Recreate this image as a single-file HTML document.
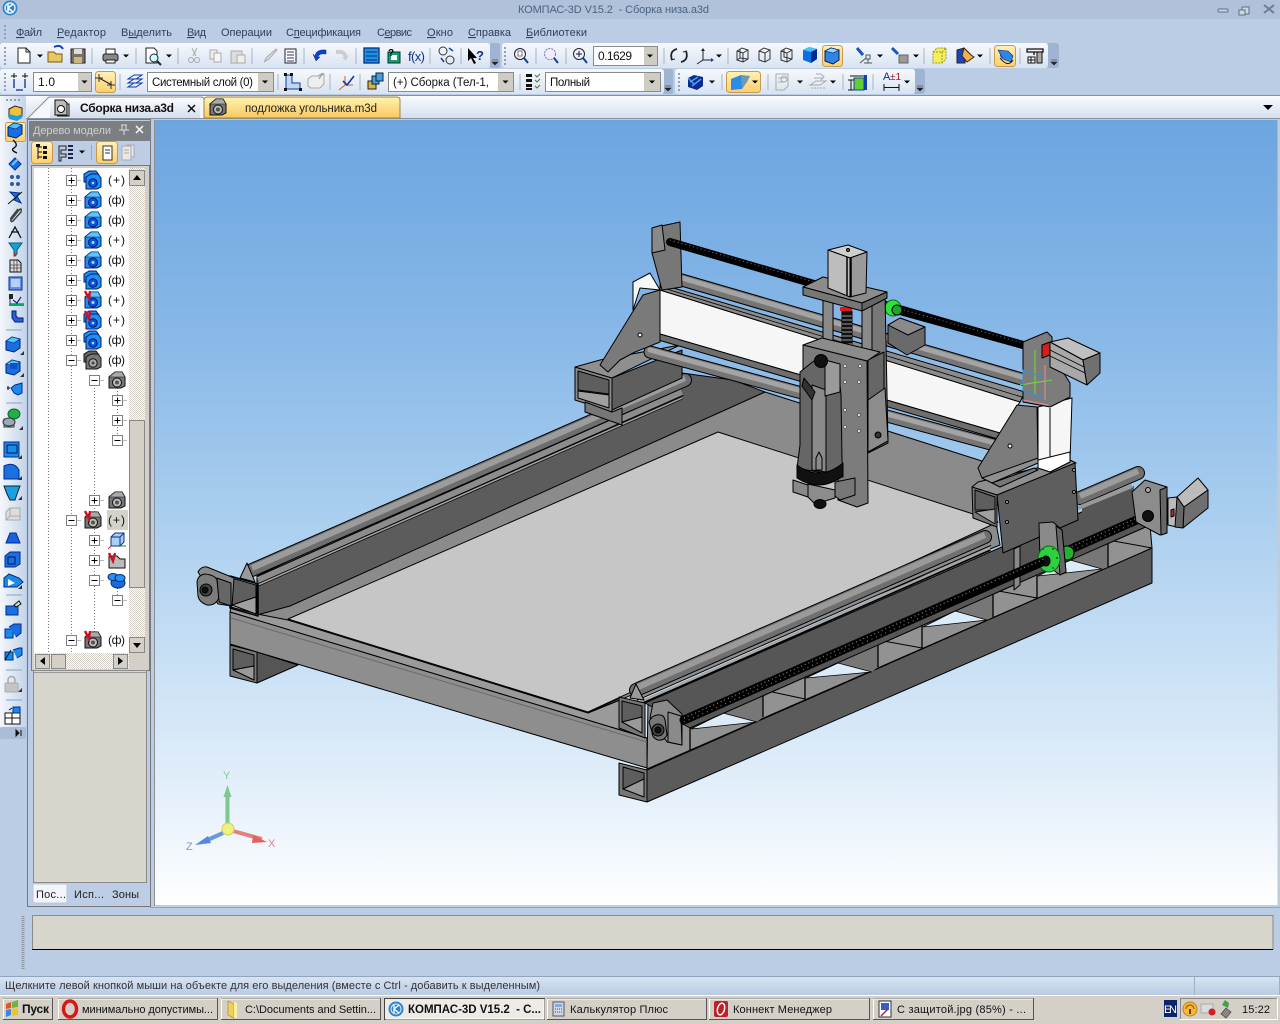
<!DOCTYPE html>
<html lang="ru"><head><meta charset="utf-8"><title>КОМПАС-3D V15.2 - Сборка низа.a3d</title>
<style>
html,body{margin:0;padding:0;background:#bacde5;width:1280px;height:1024px;overflow:hidden}
svg{display:block;position:absolute;left:0;top:0}
text{font-family:"Liberation Sans","Noto Sans CJK SC",sans-serif;font-size:11px;white-space:pre}
.m{fill:#2f4060;font-size:11px}
.t{fill:#111;font-size:12px}
.b{fill:#111;font-size:11px}
</style></head><body>
<svg width="1280" height="1024" viewBox="0 0 1280 1024" xmlns="http://www.w3.org/2000/svg">
<defs>
<linearGradient id="vp" x1="0" y1="0" x2="0" y2="1"><stop offset="0" stop-color="#6ca5e0"/><stop offset=".25" stop-color="#85b6e7"/><stop offset=".48" stop-color="#a6ccee"/><stop offset=".87" stop-color="#e6f1fb"/><stop offset="1" stop-color="#fff"/></linearGradient>
<linearGradient id="tb" x1="0" y1="0" x2="0" y2="1"><stop offset="0" stop-color="#f6f9fd"/><stop offset="1" stop-color="#d8e3f1"/></linearGradient>
<linearGradient id="tabs" x1="0" y1="0" x2="0" y2="1"><stop offset="0" stop-color="#fbfcfe"/><stop offset="1" stop-color="#d3dfee"/></linearGradient>
<linearGradient id="lt" x1="0" y1="0" x2="1" y2="0"><stop offset="0" stop-color="#f4f7fc"/><stop offset="1" stop-color="#c4d4e9"/></linearGradient>
<linearGradient id="sel" x1="0" y1="0" x2="0" y2="1"><stop offset="0" stop-color="#fff1b8"/><stop offset="1" stop-color="#fdcf6c"/></linearGradient>
<linearGradient id="ytab" x1="0" y1="0" x2="0" y2="1"><stop offset="0" stop-color="#fff3b0"/><stop offset="1" stop-color="#f9c860"/></linearGradient>
<linearGradient id="st" x1="0" y1="0" x2="0" y2="1"><stop offset="0" stop-color="#d9e5f4"/><stop offset="1" stop-color="#b9cbe3"/></linearGradient>
<pattern id="hatch" width="2" height="2" patternUnits="userSpaceOnUse"><rect width="2" height="2" fill="#fff"/><rect width="1" height="1" fill="#d4d0c8"/><rect x="1" y="1" width="1" height="1" fill="#d4d0c8"/></pattern>
<symbol id="bi" overflow="visible"><path d="M-8,-3 L-2,-8 L5,-8 L8,-3 L8,6 L4,8 L-8,8Z" fill="#1d90f4" stroke="#001a70"/><path d="M-8,-3 L-2,-8 L5,-8 L8,-3 L3,-3Z" fill="#55c8ff" stroke="#001a70" stroke-width=".6"/><circle cx="0" cy="2.500" r="4.500" fill="#0d52d8" stroke="#001a70"/><circle cx="0" cy="2.500" r="1.500" fill="#9fe0ff"/></symbol>
<symbol id="bm" overflow="visible"><path d="M-9,-6 L-4,-9 L3,-9 L6,-5 L6,2 L-9,2Z" fill="#1d90f4" stroke="#001a70"/><path d="M-7,-3 L-2,-6 L5,-6 L8,-2 L8,7 L4,9 L-7,9Z" fill="#1d90f4" stroke="#001a70"/><circle cx="0" cy="3" r="4.200" fill="#0d52d8" stroke="#001a70"/><circle cx="0" cy="3" r="1.300" fill="#9fe0ff"/></symbol>
<symbol id="gi" overflow="visible"><path d="M-8,-3 L-2,-8 L5,-8 L8,-3 L8,6 L4,8 L-8,8Z" fill="#777" stroke="#111"/><path d="M-8,-3 L-2,-8 L5,-8 L8,-3 L3,-3Z" fill="#aaa" stroke="#111" stroke-width=".6"/><circle cx="0" cy="2.500" r="4.500" fill="#bbb" stroke="#111"/><circle cx="0" cy="2.500" r="2" fill="#555"/></symbol>
<symbol id="gm" overflow="visible"><path d="M-9,-6 L-4,-9 L3,-9 L6,-5 L6,2 L-9,2Z" fill="#666" stroke="#111"/><path d="M-7,-3 L-2,-6 L5,-6 L8,-2 L8,7 L4,9 L-7,9Z" fill="#777" stroke="#111"/><circle cx="0" cy="3" r="4.200" fill="#aaa" stroke="#111"/><circle cx="0" cy="3" r="1.500" fill="#444"/></symbol>
<symbol id="rc" overflow="visible"><path d="M-8,-9 L-4,-1 L-3,-9" fill="none" stroke="#d01020" stroke-width="2.400"/></symbol>
<symbol id="pl" overflow="visible"><rect x="-5" y="-5" width="10" height="10" fill="#fff" stroke="#808080"/><path d="M-3,0H3M0,-3V3" stroke="#000" fill="none"/><path d="M6,0H10" stroke="#777" stroke-dasharray="1 1"/></symbol>
<symbol id="mi" overflow="visible"><rect x="-5" y="-5" width="10" height="10" fill="#fff" stroke="#808080"/><path d="M-3,0H3" stroke="#000" fill="none"/><path d="M6,0H10" stroke="#777" stroke-dasharray="1 1"/></symbol>
<symbol id="ar" overflow="visible"><path d="M-3,-1.500 H3 L0,1.500Z" fill="#000"/></symbol>
<symbol id="sq" overflow="visible"><path d="M-7,-3 L-1,-7 L7,-5 L7,4 L1,8 L-7,6Z" fill="#1a6fe0" stroke="#002080"/><path d="M-7,-3 L-1,-7 L7,-5 L1,-1Z" fill="#4ec2ff" stroke="#002080" stroke-width=".6"/></symbol>
<symbol id="cor" overflow="visible"><path d="M0,0H-4L0,-4Z" fill="#333"/></symbol>
</defs>

<!-- window chrome -->
<rect width="1280" height="19" fill="#b0c1d9"/>
<rect y="19" width="1280" height="957" fill="#bacde5"/>
<text x="518" y="13" fill="#4a6484" textLength="191">КОМПАС-3D V15.2  - Сборка низа.a3d</text>
<circle cx="10" cy="8" r="7.500" fill="#2f83cf"/><circle cx="10" cy="8" r="5" fill="none" stroke="#d8eefc" stroke-width="1.500"/><path d="M8,4V12M8,8L13,4M8,8L13,12" stroke="#fff" stroke-width="1.500" fill="none"/>
<g stroke="#5e7088" fill="none"><rect x="1218" y="9" width="10" height="3" rx="1" fill="#cdd6e2"/><rect x="1242" y="7" width="7" height="7" fill="#cdd6e2"/><rect x="1239" y="10" width="6" height="5" fill="#cdd6e2"/><path d="M1264,5 L1274,13M1274,5 L1264,13" stroke-width="2" stroke="#6e7e94"/></g>
<!-- menu -->
<path d="M5,25V40" stroke="#8ea1bb" stroke-dasharray="2 2" stroke-width="2"/>
<text class="m" x="16" y="36" textLength="26"><tspan text-decoration="underline">Ф</tspan>айл</text>
<text class="m" x="57" y="36" textLength="49"><tspan text-decoration="underline">Р</tspan>едактор</text>
<text class="m" x="121" y="36" textLength="51">В<tspan text-decoration="underline">ы</tspan>делить</text>
<text class="m" x="187" y="36" textLength="19"><tspan text-decoration="underline">В</tspan>ид</text>
<text class="m" x="221" y="36" textLength="51">Операции</text>
<text class="m" x="286" y="36" textLength="75">С<tspan text-decoration="underline">п</tspan>ецификация</text>
<text class="m" x="377" y="36" textLength="35">С<tspan text-decoration="underline">е</tspan>рвис</text>
<text class="m" x="427" y="36" textLength="26"><tspan text-decoration="underline">О</tspan>кно</text>
<text class="m" x="468" y="36" textLength="43"><tspan text-decoration="underline">С</tspan>правка</text>
<text class="m" x="526" y="36" textLength="61"><tspan text-decoration="underline">Б</tspan>иблиотеки</text>

<!-- toolbars -->
<rect x="490" y="43" width="10" height="25" rx="2" fill="#9fb4d2"/><path d="M492,60h6M492,62h6l-3,3z" stroke="#222" fill="#222" stroke-width=".6"/>
<rect x="0" y="43" width="490" height="25" rx="3" fill="url(#tb)"/>
<rect x="1046" y="43" width="13" height="25" rx="3" fill="#9fb4d2"/><path d="M1051,60h6M1051,62h6l-3,3z" stroke="#222" fill="#222" stroke-width=".6"/>
<rect x="502" y="43" width="546" height="25" rx="3" fill="url(#tb)"/>
<rect x="662" y="69" width="11" height="25" rx="2" fill="#9fb4d2"/><path d="M665,86h6M665,88h6l-3,3z" stroke="#222" fill="#222" stroke-width=".6"/>
<rect x="0" y="69" width="664" height="25" rx="3" fill="url(#tb)"/>
<rect x="913" y="69" width="12" height="25" rx="3" fill="#9fb4d2"/><path d="M917,86h6M917,88h6l-3,3z" stroke="#222" fill="#222" stroke-width=".6"/>
<rect x="675" y="69" width="240" height="25" rx="3" fill="url(#tb)"/>
<g stroke="#8ea1bb" stroke-width="2" stroke-dasharray="2 2" fill="none"><path d="M5,47V65M5,73V91M505,47V65M679,73V91"/></g>
<g stroke="#a9b4c4" fill="none"><path d="M92,48V64M136,48V64M178,48V64M252,48V64M304,48V64M356,48V64M430,48V64M461,48V64M536,48V64M566,48V64M664,48V64M728,48V64M924,48V64M990,48V64M1020,48V64M120,74V90M278,74V90M330,74V90M360,74V90M520,74V90M722,74V90M768,74V90M843,74V90M873,74V90"/></g>

<!-- TB1 icons -->
<path d="M18,48h8l4,4v11h-12z" fill="#fff" stroke="#222"/><path d="M26,48v4h4" fill="none" stroke="#222"/>
<use href="#ar" x="40" y="56"/>
<path d="M48,52h6l2,2h6v8h-14z" fill="#e8c860" stroke="#7a5a10"/><path d="M54,47 Q60,44 63,49" fill="none" stroke="#1040c0" stroke-width="2"/>
<rect x="71" y="49" width="14" height="14" fill="#7a7068" stroke="#222"/><rect x="74" y="49" width="8" height="5" fill="#ddd"/><rect x="74" y="57" width="8" height="6" fill="#c8b880"/>
<rect x="103" y="54" width="15" height="7" rx="2" fill="#888" stroke="#222"/><rect x="106" y="49" width="9" height="5" fill="#fff" stroke="#222"/><rect x="106" y="60" width="9" height="3" fill="#fff" stroke="#222"/>
<use href="#ar" x="126" y="56"/>
<path d="M146,48h8l3,3v12h-11z" fill="#fff" stroke="#222"/><circle cx="154" cy="58" r="4" fill="#cfe" stroke="#225"/><path d="M157,61l4,4" stroke="#224" stroke-width="2"/>
<use href="#ar" x="169" y="56"/>
<g stroke="#aaa" fill="none"><path d="M192,48l4,8M197,48l-4,8"/><circle cx="191" cy="60" r="2.500"/><circle cx="197" cy="60" r="2.500"/><rect x="210" y="50" width="7" height="9" fill="#eee"/><rect x="214" y="53" width="7" height="9" fill="#f6f6f6"/><rect x="231" y="51" width="11" height="12" fill="#ddd"/><rect x="237" y="55" width="8" height="8" fill="#eee"/><path d="M264,62l3,-5 9,-8 1,1 -8,9z" fill="#ddd"/></g>
<rect x="285" y="49" width="11" height="14" fill="#fff" stroke="#223"/><path d="M287,52h7M287,55h7M287,58h7M287,61h7" stroke="#335" />
<path d="M326,50 Q316,49 315,56l-2,-2 3,7 4,-4 -2,0 Q319,53 326,54z" fill="#1040d0" stroke="#0a2a90" stroke-width=".5"/>
<path d="M336,50 Q346,49 347,56l2,-2 -3,7 -4,-4 2,0 Q343,53 336,54z" fill="#ccc"/>
<rect x="364" y="48" width="15" height="15" fill="#2090e0" stroke="#003080" stroke-width="1.300"/><path d="M366,52h11M366,56h11M366,60h11" stroke="#003080"/>
<rect x="388" y="52" width="12" height="11" fill="#1c9a70" stroke="#033"/><rect x="391" y="55" width="6" height="5" fill="#fff"/><text x="388" y="56" fill="#000" style="font-weight:bold;font-size:10px">?</text>
<text x="408" y="61" fill="#123088" style="font-size:13px" textLength="17">f(x)</text>
<circle cx="443" cy="51" r="4" fill="none" stroke="#333"/><circle cx="450" cy="60" r="4" fill="none" stroke="#333"/><path d="M449,48l4,3M441,58l3,4" stroke="#1040c0" stroke-width="1.500"/>
<path d="M468,48v13l3,-3 3,6 2,-1 -3,-5h4z" fill="#000"/><text x="476" y="60" fill="#123088" style="font-size:13px;font-weight:bold">?</text>
<circle cx="520" cy="54" r="5.500" fill="#eef" stroke="#223"/><path d="M524,58l4,5" stroke="#1040a0" stroke-width="2"/><rect x="518" y="51" width="4" height="5" fill="#fff" stroke="#333" stroke-width=".6"/>
<circle cx="550" cy="54" r="5.500" fill="#eef" stroke="#77a" stroke-dasharray="2 1"/><path d="M554,58l4,5" stroke="#1040a0" stroke-width="2"/>
<circle cx="579" cy="54" r="5.500" fill="#eef" stroke="#223"/><path d="M576,54h6M579,51v6" stroke="#123"/><path d="M583,58l4,5" stroke="#1040a0" stroke-width="2"/>
<rect x="593.500" y="46.500" width="64" height="19" fill="#fff" stroke="#8a8a8a"/><rect x="644" y="47" width="13" height="18" fill="#cfccc4"/><use href="#ar" x="650" y="56"/>
<text x="598" y="60" fill="#111" textLength="34" style="font-size:12px">0.1629</text>
<path d="M677,49 Q669,51 672,60M681,62 Q689,60 686,51" fill="none" stroke="#222" stroke-width="1.800"/><path d="M671,60l4,-1M687,51l-4,1" stroke="#222"/>
<path d="M703,49V60L697,64M703,60H711" fill="none" stroke="#222"/><path d="M711,58l3,2 -3,2z" fill="#1040c0"/><path d="M701,51l2,-3 2,3z" fill="#222"/><use href="#ar" x="719" y="56"/>
<g fill="none" stroke="#333"><path d="M737,51l5,-3 6,2v9l-5,3 -6,-2zM737,51l6,2v9M743,53l5,-3M740,49v9l-3,2M740,58l8,1"/><path d="M759,51l5,-3 6,2v9l-5,3 -6,-2zM759,51l6,2v9M765,53l5,-3"/><path d="M781,51l5,-3 6,2v9l-5,3 -6,-2zM781,51l6,2v9M787,53l5,-3M784,49v8l8,2"/></g>
<path d="M803,50l6,-3 8,2 v10l-6,4 -8,-3z" fill="#0a6fe0"/><path d="M803,50l6,-3 8,2 -6,3z" fill="#48c0ff"/><path d="M811,52v11l6,-4V49z" fill="#002a90"/>
<rect x="822.500" y="45.500" width="20" height="21" rx="3" fill="url(#sel)" stroke="#c99a4e"/><path d="M825,51l6,-3 8,2 v10l-6,4 -8,-3z" fill="#2e86e0" stroke="#001a60"/><path d="M825,51l6,-3 8,2 -6,3z" fill="#8dd8ff" stroke="#001a60" stroke-width=".6"/>
<path d="M857,48l6,7" stroke="#1458c0" stroke-width="3"/><path d="M866,55h4v4h-4zM868,59v4M864,63h8M866,58l-6,5" fill="none" stroke="#555"/><use href="#ar" x="880" y="56"/>
<path d="M892,48l6,6" stroke="#1458c0" stroke-width="3"/><rect x="899" y="55" width="9" height="8" fill="#999" stroke="#666"/><use href="#ar" x="916" y="56"/>
<path d="M933,52l4,-4h9v11l-4,4h-9z" fill="#f5ef60" stroke="#9a9a20" stroke-dasharray="2 1"/><path d="M933,52h9v11M942,52l4,-4" fill="none" stroke="#9a9a20" stroke-dasharray="2 1"/>
<path d="M957,50l7,-2 7,7 -6,3v5h-8z" fill="#1448c0" stroke="#321"/><path d="M964,48l7,7 3,2 -7,5 -5,-6z" fill="#f2b050" stroke="#421"/><use href="#ar" x="980" y="56"/>
<rect x="994.500" y="45.500" width="21" height="21" rx="3" fill="url(#sel)" stroke="#c99a4e"/><circle cx="1004" cy="55" r="4" fill="#1c6ad8"/><path d="M998,50l10,1 5,5-2,6-8,-3z" fill="#2f86e4" stroke="#012a70" stroke-width=".6"/><path d="M1000,58 Q1008,68 1013,60" fill="none" stroke="#111"/>
<path d="M1027,49h16v3h-16zM1040,52v11M1034,52v3" stroke="#111" fill="none" stroke-width="1.300"/><rect x="1037" y="52" width="5" height="11" fill="#aaa" stroke="#111"/><rect x="1028" y="57" width="7" height="6" fill="#fff" stroke="#111"/><path d="M1028,60h7M1031,57v6" stroke="#111"/>

<!-- TB2 icons -->
<g stroke="#134" fill="none"><path d="M14,79V88M25,79V88M16,90h7" stroke="#0a2a90" stroke-width="1.300"/><path d="M14,73v5M11,76h6M25,73v5M22,76h6" stroke="#111"/></g>
<rect x="33.500" y="72.500" width="58" height="19" fill="#fff" stroke="#8a8a8a"/><rect x="78" y="73" width="13" height="18" fill="#cfccc4"/><use href="#ar" x="84.500" y="82"/>
<text x="38" y="86" fill="#111" textLength="17" style="font-size:12px">1.0</text>
<rect x="95.500" y="71.500" width="20" height="21" rx="3" fill="url(#sel)" stroke="#c99a4e"/><path d="M99,78L112,85" stroke="#222"/><g fill="#222"><path d="M99,74v8M95,78h8" stroke="#333"/><path d="M111,81v8M107,85h8" stroke="#333"/></g>
<g fill="none" stroke="#1038a8"><path d="M128,79l6,-4h8l-6,4zM128,83l6,-4h8l-6,4zM128,87l6,-4h8l-6,4z"/></g>
<rect x="147.500" y="72.500" width="126" height="19" fill="#fff" stroke="#8a8a8a"/><rect x="258" y="73" width="15" height="18" fill="#cfccc4"/><use href="#ar" x="265" y="82"/>
<text x="152" y="86" fill="#111" textLength="101" style="font-size:11.500px">Системный слой (0)</text>
<path d="M286,75v14h14v-6h-8v-8z" fill="#c0d8f0" stroke="#1038a8"/><g fill="#111"><rect x="284" y="73" width="3" height="3"/><rect x="290" y="73" width="3" height="3"/><rect x="284" y="88" width="3" height="3"/><rect x="299" y="88" width="3" height="3"/></g>
<path d="M308,79l4,-3h8l4,-2v10l-4,4h-9l-3,-2z" fill="#eee" stroke="#aaa"/><path d="M318,76l5,-3-4,6" stroke="#999" fill="#ccc"/>
<path d="M345,76v9l-6,5M345,85h8" stroke="#d06030" fill="none"/><path d="M343,81l4,4 7,-9" stroke="#1038a8" stroke-width="1.600" fill="none"/>
<rect x="368" y="81" width="8" height="8" fill="#e0b040" stroke="#222"/><rect x="372" y="76" width="7" height="8" fill="#40a0e0" stroke="#123"/><rect x="376" y="73" width="7" height="8" fill="#40a0e0" stroke="#123"/>
<rect x="388.500" y="72.500" width="125" height="19" fill="#fff" stroke="#8a8a8a"/><rect x="498" y="73" width="15" height="18" fill="#cfccc4"/><use href="#ar" x="505.500" y="82"/>
<text x="393" y="86" fill="#111" textLength="96" style="font-size:11.500px">(+) Сборка (Тел-1,</text>
<g fill="#111"><rect x="526" y="74" width="6" height="3"/><rect x="526" y="79" width="6" height="3"/><rect x="526" y="84" width="6" height="3"/><rect x="526" y="88" width="6" height="2"/></g><path d="M535,75l2,2 3,-3M535,80l2,2 3,-3M535,86l2,2 3,-3" stroke="#4a7a3a" fill="none"/>
<rect x="545.500" y="72.500" width="115" height="19" fill="#fff" stroke="#8a8a8a"/><rect x="644" y="73" width="16" height="18" fill="#cfccc4"/><use href="#ar" x="652" y="82"/>
<text x="550" y="86" fill="#111" textLength="40" style="font-size:11.500px">Полный</text>
<path d="M688,78l6,-3 9,2v9l-6,4 -9,-3z" fill="#0c2a90"/><path d="M690,82l8,-5M692,86l9,-7M688,78l6,6" stroke="#4ea0f0" stroke-width="1.500"/><use href="#ar" x="712" y="82"/>
<rect x="726.500" y="71.500" width="34" height="21" rx="3" fill="url(#sel)" stroke="#c99a4e"/><path d="M731,79l10,-4 9,1 -3,6 -5,7 -11,1z" fill="#2b8ce8"/><path d="M741,75l9,1-3,6-5,7z" fill="#ffc14d" opacity=".3"/><use href="#ar" x="755" y="82"/>
<g fill="none" stroke="#aaa"><path d="M776,74h12v12l-4,4h-8zM778,78h8M778,82h6"/><circle cx="784" cy="79" r="3"/></g><use href="#ar" x="800" y="82"/>
<g fill="none" stroke="#aaa"><path d="M810,85l6,-4h10l-6,4zM816,74h5l3,3 -3,3M814,78h8"/><path d="M811,88h14" stroke-dasharray="2 1"/></g><use href="#ar" x="833" y="82"/>
<path d="M850,76h14M851,80v10M848,80h6M848,90h6" stroke="#111" fill="none"/><rect x="854" y="78" width="10" height="12" fill="#60d030" stroke="#1040b0"/><rect x="864" y="75" width="3" height="15" fill="#1040b0"/>
<text x="883" y="80" fill="#123088" style="font-size:11px">A</text><text x="890" y="80" fill="#b01020" style="font-size:10px">±1</text><path d="M884,84v7M899,84v7M884,87.500h15" stroke="#111" fill="none"/><use href="#ar" x="907" y="82"/>

<!-- tabs -->
<rect y="95" width="1280" height="24" fill="url(#tabs)"/>
<path d="M0,95.500H1280M0,118.500H1280" stroke="#8c8f94" fill="none"/>
<path d="M28,118 L49,97 H202 L206,100 V118" fill="#f4f7fc" stroke="#8a8d94"/><rect x="50" y="98" width="150" height="20" fill="url(#tabs)"/>
<path d="M55,100h9l3,3v12h-12z" fill="#bbb" stroke="#111"/><circle cx="61" cy="109" r="3.500" fill="#fff" stroke="#111"/><path d="M67,104h2v12h-12" fill="none" stroke="#111"/>
<text x="80" y="112" fill="#111" style="font-weight:bold;font-size:12px" textLength="94">Сборка низа.a3d</text>
<path d="M188,105l7,7M195,105l-7,7" stroke="#111" stroke-width="1.500"/>
<path d="M204,118 V100 Q204,97 208,97 H396 Q400,97 400,100 V118Z" fill="url(#ytab)" stroke="#9a8444"/>
<use href="#gi" x="218" y="107"/>
<text x="245" y="112" fill="#222" textLength="132" style="font-size:11.500px">подложка угольника.m3d</text>
<path d="M1263,105h10l-5,5z" fill="#000"/>

<!-- left vertical toolbar -->
<rect x="0" y="96" width="26" height="632" rx="2" fill="url(#lt)"/>
<rect x="0" y="727" width="26" height="12" fill="#a9bcd8" rx="2"/><path d="M16,730l3,3 -3,3zM21,730v6" stroke="#111" fill="#111"/>
<path d="M6,100h14" stroke="#8ea1bb" stroke-dasharray="2 2" stroke-width="2"/>
<path d="M9,109l6,-3 7,2v8l-5,3 -8,-2z" fill="#f0c040" stroke="#321"/><path d="M9,114l8,2 5,-2v4l-5,3 -8,-2z" fill="#18a0e0"/>
<rect x="5.500" y="122.500" width="20" height="19" rx="2" fill="url(#sel)" stroke="#c99a4e"/><use href="#sq" x="15" y="130" />
<path d="M13,140 Q19,145 14,148 Q10,150 17,153" fill="none" stroke="#111" stroke-width="1.400"/>
<path d="M9,164l6,-6 6,6-6,6z" fill="#1a6fe0" stroke="#003090"/><path d="M12,165l6,-6" stroke="#6cc8ff" stroke-width="2"/>
<g fill="#2a5aa0"><circle cx="12" cy="177" r="2"/><circle cx="18" cy="177" r="2"/><circle cx="12" cy="184" r="2"/><circle cx="18" cy="184" r="2"/></g>
<path d="M10,192l6,6 -2,2 7,3 -4,-7 3,-3z" fill="#1a6fe0" stroke="#003090"/><path d="M8,204 L22,192" stroke="#111"/>
<path d="M11,220 L19,210 Q22,207 21,212 L13,221 Q10,223 11,218 L18,209" fill="none" stroke="#444" stroke-width="1.500"/>
<path d="M9,238 L15,227 L21,238M11,232h8" fill="none" stroke="#111" stroke-width="1.300"/>
<path d="M9,243h13l-5,7v4l-3,2v-6z" fill="#18a0d0" stroke="#0a5a80"/><circle cx="15" cy="255" r="1.500" fill="#d02020"/>
<path d="M10,260h8l3,3v9h-11z" fill="#ddd" stroke="#111"/><path d="M10,265h11M10,268h11M14,260v12M17,260v12" stroke="#111" stroke-width=".6"/>
<rect x="9" y="277" width="13" height="13" fill="#6090e8" stroke="#123080"/><rect x="11" y="279" width="9" height="8" fill="#b8d0f4"/>
<path d="M10,294v10h14" stroke="#123080" fill="none"/><rect x="9" y="294" width="4" height="5" fill="#222"/><path d="M13,300l4,3 4,-6" fill="none" stroke="#228" stroke-width="1.200"/><path d="M9,305h15" stroke="#0a6" stroke-width="2"/>
<path d="M12,311v7l3,4h8v-4h-5l-2,-2v-5z" fill="#2a60d0" stroke="#002080"/>
<path d="M6,330h16M6,403h16M6,595h16M6,670h16M6,700h16" stroke="#8ea1bb"/>
<use href="#sq" x="13" y="344"/><use href="#cor" x="24" y="355"/>
<use href="#sq" x="13" y="367"/><rect x="10" y="363" width="7" height="6" fill="#1050c0"/><use href="#cor" x="24" y="377"/>
<path d="M7,388h3M8,386v4" stroke="#111"/><path d="M11,388l4,-3 7,-2v10l-4,2 -4,-2z" fill="#1c8ae8" stroke="#002a90"/>
<rect x="4" y="419" width="10" height="8" fill="#ccc" stroke="#333"/><ellipse cx="14" cy="414" rx="6" ry="5" fill="#22b040" stroke="#063"/><ellipse cx="9" cy="422" rx="6" ry="4" fill="#9ab" stroke="#333"/><use href="#cor" x="23" y="430"/>
<rect x="4" y="442" width="15" height="15" fill="#1a8ce8" stroke="#002a90"/><rect x="7" y="445" width="10" height="8" fill="none" stroke="#001860"/><use href="#cor" x="22" y="459"/>
<path d="M4,466 Q14,461 19,470 V479 H4Z" fill="#1a70e0" stroke="#002a90"/><use href="#cor" x="22" y="480"/>
<path d="M4,486h16l-3,8 -2,6h-5l-3,-6z" fill="#18a0e0" stroke="#123"/><use href="#cor" x="22" y="500"/>
<path d="M6,512l4,-4h10v12h-14z" fill="#ddd" stroke="#aaa"/><path d="M10,508v8h10M6,520l4,-4" fill="none" stroke="#aaa"/>
<path d="M6,543l4,-10h6l4,10z" fill="#1a60e0" stroke="#002a90"/>
<path d="M5,556l5,-4h10v12l-5,3h-10z" fill="#1a70e0" stroke="#002a90"/><rect x="8" y="557" width="7" height="7" fill="none" stroke="#001860"/>
<path d="M4,578l5,-4 10,4 4,4 -6,5 -13,0z" fill="#1a8ae8" stroke="#002a90"/><path d="M8,579l7,4-7,3z" fill="#fff"/><use href="#cor" x="22" y="589"/>
<path d="M6,606h12v9h-12z" fill="#1a70e0" stroke="#002a90"/><path d="M14,605l5,-4 2,3 -5,3z" fill="#c8e8c8" stroke="#111"/>
<rect x="5" y="629" width="8" height="9" fill="#1a8ae8" stroke="#002a90"/><path d="M9,627l5,-3h7v9l-5,4" fill="#1a70e0" stroke="#002a90"/>
<path d="M5,652h8v8h-8zM13,650l6,-2h3v7l-5,3" fill="#1a8ae8" stroke="#002a90"/><path d="M5,660l6,-10" stroke="#111"/>
<rect x="5" y="683" width="13" height="9" rx="1" fill="#c4c4c4" stroke="#aaa"/><path d="M8,683v-3 a3,3 0 0 1 7,0v3" fill="none" stroke="#aaa" stroke-width="1.500"/>
<use href="#cor" x="22" y="692"/>
<rect x="5" y="713" width="15" height="11" fill="#fff" stroke="#111"/><path d="M5,718h15M12,713v11" stroke="#111"/><rect x="13" y="707" width="7" height="6" fill="#1a8ae8" stroke="#002a90"/>
<path d="M9,710l3,-2" stroke="#111"/>

<!-- model panel -->
<rect x="27.500" y="119.500" width="123" height="787" fill="#bccde5" stroke="#77797c"/>
<rect x="29" y="121" width="121" height="20" fill="#7b7f82"/>
<text x="33" y="134" fill="#cfd0d0" textLength="78">Дерево модели</text>
<path d="M121,125h6M122,125v5h4v-5M119,130h10M124,130v5" stroke="#ddd" fill="none"/>
<path d="M136,126l7,7M143,126l-7,7" stroke="#eee" stroke-width="1.600"/>
<rect x="31.500" y="141.500" width="21" height="22" rx="3" fill="url(#sel)" stroke="#c99a4e"/><path d="M38,145v14M38,147h4M38,152h4M38,157h4" stroke="#111" fill="none"/><rect x="36" y="144" width="4" height="3" fill="#111"/><rect x="43" y="146" width="4" height="3" fill="#111"/><rect x="43" y="151" width="4" height="3" fill="#111"/><rect x="43" y="156" width="4" height="3" fill="#111"/>
<path d="M59,146h7v4h-5v4h5v3h-5v4h-2z" fill="none" stroke="#222"/><path d="M68,146h5M68,150h5M68,154h5M68,158h5" stroke="#224" stroke-width="2"/>
<use href="#ar" x="82" y="152"/><path d="M91.500,145V160" stroke="#9aa8ba"/>
<rect x="96.500" y="141.500" width="21" height="22" rx="3" fill="url(#sel)" stroke="#c99a4e"/><rect x="103" y="146" width="9" height="14" fill="#fff" stroke="#333"/><path d="M105,150h5M105,153h5" stroke="#333"/>
<path d="M122,146h9v14h-9zM127,146v-1h7v12h-3M124,150h5M124,153h5" fill="#e8e8e8" stroke="#aaa"/>

<!-- tree -->
<rect x="31.500" y="165.500" width="118" height="505" fill="#d4d0c8" stroke="#77797c"/>
<rect x="34" y="168" width="95" height="485" fill="#fff"/>
<rect x="129" y="168" width="16" height="485" fill="url(#hatch)"/>
<rect x="34" y="653" width="95" height="16" fill="url(#hatch)"/>
<g stroke="#777" stroke-dasharray="1 2" fill="none"><path d="M48.500,168V653M71.500,168V653M94.500,385V640M117.500,385V445M117.500,585V605"/></g>
<rect x="129.500" y="170.500" width="15" height="15" fill="#d4d0c8" stroke="#888"/><path d="M133,180h8l-4,-5z" fill="#000"/>
<rect x="129.500" y="637.500" width="15" height="15" fill="#d4d0c8" stroke="#888"/><path d="M133,643h8l-4,5z" fill="#000"/>
<rect x="129.500" y="420.500" width="15" height="167" fill="#d4d0c8" stroke="#888"/>
<rect x="35.500" y="654.500" width="14" height="14" fill="#d4d0c8" stroke="#888"/><path d="M45,657v8l-5,-4z" fill="#000"/>
<rect x="51.500" y="654.500" width="14" height="14" fill="#d4d0c8" stroke="#888"/>
<rect x="113.500" y="654.500" width="14" height="14" fill="#d4d0c8" stroke="#888"/><path d="M118,657v8l5,-4z" fill="#000"/>
<rect x="107" y="510" width="21" height="20" fill="#d4d1c9"/>
<g>
<use href="#pl" x="71.500" y="180.500"/><use href="#bm" x="93" y="180"/><text class="t" x="108" y="184" textLength="17">(+)</text>
<use href="#pl" x="71.500" y="200.500"/><use href="#bi" x="93" y="200"/><text class="t" x="108" y="204" textLength="17">(ф)</text>
<use href="#pl" x="71.500" y="220.500"/><use href="#bi" x="93" y="220"/><text class="t" x="108" y="224" textLength="17">(ф)</text>
<use href="#pl" x="71.500" y="240.500"/><use href="#bi" x="93" y="240"/><text class="t" x="108" y="244" textLength="17">(+)</text>
<use href="#pl" x="71.500" y="260.500"/><use href="#bi" x="93" y="260"/><text class="t" x="108" y="264" textLength="17">(ф)</text>
<use href="#pl" x="71.500" y="280.500"/><use href="#bm" x="93" y="280"/><text class="t" x="108" y="284" textLength="17">(ф)</text>
<use href="#pl" x="71.500" y="300.500"/><use href="#bi" x="93" y="300"/><use href="#rc" x="93" y="300"/><text class="t" x="108" y="304" textLength="17">(+)</text>
<use href="#pl" x="71.500" y="320.500"/><use href="#bm" x="93" y="320"/><use href="#rc" x="93" y="320"/><text class="t" x="108" y="324" textLength="17">(+)</text>
<use href="#pl" x="71.500" y="340.500"/><use href="#bm" x="93" y="340"/><text class="t" x="108" y="344" textLength="17">(ф)</text>
<use href="#mi" x="71.500" y="360.500"/><use href="#gm" x="93" y="360"/><text class="t" x="108" y="364" textLength="17">(ф)</text>
<use href="#mi" x="94.500" y="380.500"/><use href="#gi" x="117" y="380"/>
<use href="#pl" x="117.500" y="400.500"/><use href="#pl" x="117.500" y="420.500"/><use href="#mi" x="117.500" y="440.500"/>
<use href="#pl" x="94.500" y="500.500"/><use href="#gi" x="117" y="500"/>
<use href="#mi" x="71.500" y="520.500"/><use href="#gi" x="93" y="520"/><use href="#rc" x="93" y="520"/><text class="t" x="108" y="524" textLength="17">(+)</text>
<use href="#pl" x="94.500" y="540.500"/><path d="M111,537l4,-4h9v9l-4,4h-9z" fill="#a8d0f4" stroke="#123080"/><path d="M111,537h9v9M120,537l4,-4" fill="none" stroke="#123080"/><path d="M111,546l-3,3" stroke="#c03030"/><path d="M120,546h6" stroke="#108040"/>
<use href="#pl" x="94.500" y="560.500"/><path d="M109,556h8l3,3h5v9h-16z" fill="#bbb" stroke="#111"/><path d="M109,553l4,8 2,-8" stroke="#d01020" stroke-width="2.400" fill="none"/>
<use href="#mi" x="94.500" y="580.500"/><ellipse cx="118" cy="583" rx="7" ry="5" fill="#1c6ad8" stroke="#012a80"/><ellipse cx="113" cy="577" rx="5" ry="3.500" fill="#2a90f0" stroke="#012a80"/><ellipse cx="120" cy="578" rx="5" ry="3.500" fill="#2a90f0" stroke="#012a80"/>
<use href="#mi" x="117.500" y="600.500"/>
<use href="#mi" x="71.500" y="640.500"/><use href="#gi" x="93" y="640"/><use href="#rc" x="93" y="640"/><text class="t" x="108" y="644" textLength="17">(ф)</text>
</g>
<rect x="33.500" y="670.500" width="113" height="212" fill="#d8d5cd" stroke="#8c8c8c"/>
<path d="M34,672.500h112" stroke="#9a9a9a"/>
<path d="M33,884 h34 v18 q0,1 -2,1 h-30 q-2,0 -2,-1z" fill="#f2f6fc" stroke="#b8c6da"/>
<text x="36" y="898" fill="#222" textLength="30">Пос...</text>
<text x="74" y="898" fill="#222" textLength="30">Исп...</text>
<text x="112" y="898" fill="#222" textLength="27">Зоны</text>

<!-- viewport -->
<rect x="155" y="120" width="1123" height="785" fill="url(#vp)"/>
<path d="M155,905.500H1278V120" stroke="#c8ccd0" fill="none"/><path d="M154.500,120V906" stroke="#8d9096"/>
<path d="M150,907.500H1280" stroke="#9aa2ae"/>

<!-- MODEL -->
<g stroke="#000" stroke-width="1" stroke-linejoin="round">
<!-- base -->
<path d="M647,770 L1152,548 L1152,583 L647,802Z" fill="#5b5b5b"/>
<path d="M619,763 L647,770 L647,802 L619,795Z" fill="#777"/>
<path d="M623,767 L644,773 L644,779 L623,789Z" fill="#5e5e5e"/><path d="M623,789 L644,779 L644,797Z" fill="#9a9a9a"/>
<path d="M257,652 L298,665 L257,683Z" fill="#555"/>
<path d="M230,645 L257,652 L257,683 L230,676Z" fill="#777"/><path d="M233,649 L254,655 L254,666 L233,670Z" fill="#5e5e5e"/><path d="M233,670 L254,666 L254,680Z" fill="#9a9a9a"/>
<path d="M257,576 L682,373 L733,380 L765,392 L290,607 L257,615Z" fill="#5c5c5c"/>
<path d="M257,615 L290,606 L765,392 L985,462 L1000,545 L590,712Z" fill="#8b8b8b"/>
<path d="M288,619 L718,432 L998,522 L588,712Z" fill="#c6c6c6"/>
<path d="M290,621.500 L588,714.500" stroke="#fff" stroke-width="1"/>
<path d="M231,607 L257,614 L288,620 L588,713 L620,700 L620,728 L647,738 L230,612Z" fill="#9a9a9a"/>
<path d="M230,612 L647,738 L647,768 L230,644Z" fill="#8e8e8e"/>
<path d="M231,618 L647,742" stroke="#6a6a6a"/>
<!-- ladder -->
<path d="M648,702 L690,728 L1150,525 L1152,548 L647,769Z" fill="#929292"/>
<g stroke="none" fill="#777"><path d="M723,713 L763,696 L763,717 L757,722Z"/><path d="M838,663 L878,645 L878,667 L872,672Z"/><path d="M955,611 L993,594 L993,617 L987,620Z"/><path d="M1070,560 L1108,544 L1108,567 L1102,569Z"/></g>
<g fill="#dcebf8" stroke="#000" stroke-width=".8"><path d="M691,729 L723,713 L757,722Z"/><path d="M806,678 L838,663 L872,672Z"/><path d="M923,627 L955,611 L987,620Z"/><path d="M1038,576 L1070,560 L1102,569Z"/></g>
<path d="M763,696V717M805,677V699M878,645V667M922,626V648M993,594V617M1037,575V598M1108,544V567M690,728V750" stroke-width="1.300" fill="none"/>
<path d="M763,690L805,699M878,640L922,648M993,590L1037,598M1108,540L1152,548" fill="none"/>
<!-- wall right -->
<path d="M645,703 L1132,490 L1150,525 L690,728Z" fill="#565656"/>
<path d="M1110,496 L1132,490 L1135,520 L1108,532Z" fill="#565656" stroke="none"/>
<!-- right rail -->
<path d="M640,703 L990,549" stroke="#000" stroke-width="4" fill="none"/>
<path d="M640,702 L990,548" stroke="#a8a8a8" stroke-width="2.500" fill="none"/>
<path d="M636,698 L990,543" stroke="#000" stroke-width="6" fill="none"/>
<path d="M636,698 L990,543" stroke="#8e8e8e" stroke-width="4" fill="none"/>
<path d="M636,690 L985,537" stroke="#000" stroke-width="14" fill="none" stroke-linecap="round"/>
<path d="M636,690 L985,537" stroke="#707070" stroke-width="12" fill="none" stroke-linecap="round"/>
<path d="M636,688 L985,535" stroke="#9a9a9a" stroke-width="6" fill="none"/>
<path d="M630,698 L636,684 L644,700Z" fill="#9a9a9a" stroke="#000"/>
<path d="M1082,508 L1134,486 L1134,492 L1082,514Z" fill="#565656" stroke="none"/>
<path d="M1080,498 L1138,473" stroke="#000" stroke-width="14" stroke-linecap="round" fill="none"/>
<path d="M1080,498 L1138,473" stroke="#707070" stroke-width="12" stroke-linecap="round" fill="none"/>
<path d="M1080,496 L1138,471" stroke="#9c9c9c" stroke-width="6" fill="none"/>
<path d="M1078,508 L1132,486" stroke="#999" stroke-width="4" fill="none"/>
<!-- corner tube right -->
<path d="M619,697 L645,703 L645,738 L619,728Z" fill="#777"/><path d="M622,701 L642,706 L642,717 L622,722Z" fill="#5e5e5e"/><path d="M622,722 L642,717 L642,733Z" fill="#9a9a9a"/>
<path d="M589,712 L620,698" fill="none"/>
<!-- left rail -->
<path d="M258,580 L682,392" stroke="#000" stroke-width="8" fill="none"/>
<path d="M258,580 L682,392" stroke="#8c8c8c" stroke-width="6" fill="none"/>
<path d="M258,585 L682,398" stroke="#000" stroke-width="3" fill="none"/>
<path d="M258,585 L682,398" stroke="#a2a2a2" stroke-width="1.600" fill="none"/>
<path d="M252,570 L685,380" stroke="#000" stroke-width="14" stroke-linecap="round" fill="none"/>
<path d="M252,570 L685,380" stroke="#6e6e6e" stroke-width="12" stroke-linecap="round" fill="none"/>
<path d="M252,568 L685,378" stroke="#9c9c9c" stroke-width="6" fill="none"/>
<path d="M240,578 L247,563 L255,582Z" fill="#9a9a9a"/>
<path d="M232,578 L256,585 L256,614 L232,605Z" fill="#5e5e5e"/><path d="M232,605 L256,597 L256,614Z" fill="#a0a0a0"/>
<path d="M230,576 L258,584 L258,616 L230,608Z" fill="none" stroke-width="1.500"/>
<!-- left bracket -->
<path d="M198,572 Q201,566 207,567 L234,578 L232,606 L218,604Z" fill="#8a8a8a"/>
<path d="M197,582 Q198,575 205,574 Q215,575 217,580 L219,598 Q215,606 207,605 Q199,602 198,596Z" fill="#7c7c7c"/>
<path d="M217,578 L231,583 L231,606 L219,602Z" fill="#666"/>
<circle cx="206" cy="590" r="6" fill="#444"/><circle cx="205" cy="590" r="3" fill="#111"/>
<!-- front bracket -->
<path d="M653,703 L667,700 L682,714 L682,745 L667,742 L650,718Z" fill="#8a8a8a"/>
<path d="M649,722 Q651,716 657,715 Q664,714 665,720 L667,735 Q664,741 658,740 Q652,738 652,732Z" fill="#777"/>
<path d="M668,712 L681,716 L682,745 L668,742Z" fill="#8a8a8a"/>
<circle cx="658" cy="730" r="6" fill="#444"/><circle cx="658" cy="730" r="3" fill="#111"/>
<!-- front screw -->
<path d="M684,720 L1148,515" stroke="#000" stroke-width="9" stroke-linecap="round" fill="none"/>
<path d="M684,718 L1148,513" stroke="#888" stroke-width="1.200" stroke-dasharray="1 3" fill="none"/>
<path d="M684,722 L1148,517" stroke="#777" stroke-width="1.200" stroke-dasharray="1 4" fill="none"/>
<!-- right end bracket & motor -->
<path d="M1132,492 L1145,480 L1167,487 L1167,533 L1160,535 L1136,522Z" fill="#8c8c8c"/>
<path d="M1160,490 L1167,487 L1167,533 L1161,535Z" fill="#666"/>
<circle cx="1148" cy="516" r="5.500" fill="#111"/><circle cx="1148" cy="490" r="2.500" fill="#aaa"/>
<path d="M1168,498 L1177,497 L1177,527 L1168,525Z" fill="#bbb"/><path d="M1171,510 l3,-1 v7 l-3,1z" fill="#a33"/>
<path d="M1177,497 L1198,478 L1208,490 L1184,507Z" fill="#bcbcbc"/>
<path d="M1184,507 L1208,490 L1208,508 L1183,528Z" fill="#6f6f6f"/>
<path d="M1177,497 L1184,507 L1183,528 L1175,527Z" fill="#666"/>
<!-- right carriage -->
<path d="M978,482 L1070,460 L1076,463 L997,495 L972,487Z" fill="#8f8f8f"/>
<path d="M972,487 L997,495 L997,527 L973,518Z" fill="#777"/><path d="M975,490 L995,497 L995,510 L975,510Z" fill="#5e5e5e"/><path d="M975,512 L995,509 L995,524Z" fill="#a0a0a0"/>
<path d="M997,495 L1075,463 L1078,520 L1003,553Z" fill="#5e5e5e"/>
<circle cx="1007" cy="502" r="1.500" fill="#bbb"/><circle cx="1007" cy="522" r="1.500" fill="#bbb"/><circle cx="1074" cy="470" r="1.500" fill="#bbb"/><circle cx="1074" cy="492" r="1.500" fill="#bbb"/>
<path d="M1014,549 L1020,546 L1020,585 L1014,590Z" fill="#888"/>
<!-- green nut -->
<circle cx="1067" cy="553" r="7" fill="#26b032"/>
<path d="M1039,523 L1053,522 L1062,530 L1066,572 L1060,575 L1040,560Z" fill="#8a8a8a"/>
<path d="M1056,526 L1062,530 L1066,572 L1060,575Z" fill="#666"/>
<ellipse cx="1049" cy="559" rx="11" ry="13" fill="#2ed040" stroke="#0c6a10"/>
<ellipse cx="1046" cy="561" rx="4" ry="5" fill="#111" />
<g fill="#0c6a10" stroke="none"><circle cx="1043" cy="549" r="1"/><circle cx="1053" cy="549" r="1"/><circle cx="1057" cy="558" r="1"/><circle cx="1053" cy="568" r="1"/><circle cx="1042" cy="570" r="1"/></g>
<path d="M940,607 L1044,561" stroke="#000" stroke-width="9" fill="none"/>
<path d="M940,605 L1044,559" stroke="#888" stroke-width="1.200" stroke-dasharray="1 3" fill="none"/>

<!-- gantry -->
<path d="M575,367 L612,378 L612,412 L575,400Z" fill="#8a8a8a"/><path d="M578,371 L609,380 L609,394 L578,390Z" fill="#5e5e5e"/><path d="M578,391 L609,395 L609,408 L578,398Z" fill="#a0a0a0"/>
<path d="M585,402 L612,412 L622,408 L622,425 L585,412Z" fill="#777"/>
<path d="M575,367 L600,360 L680,345 L612,378Z" fill="#8f8f8f"/>
<path d="M612,378 L682,350 L682,378 L612,410Z" fill="#5e5e5e"/>
<path d="M660,290 L1020,402 L1000,433 L660,334Z" fill="#f6f6f6"/>
<path d="M660,284 L1025,392 L1020,402 L660,290Z" fill="#8c8c8c"/>
<path d="M660,287 L1022,397" fill="none" stroke-width=".8"/>
<path d="M660,334 L1000,433 L998,439 L655,339Z" fill="#6e6e6e"/>
<path d="M668,276 L1025,380" stroke="#000" stroke-width="13" fill="none"/>
<path d="M668,276 L1025,380" stroke="#767676" stroke-width="11" fill="none"/>
<path d="M668,274 L1025,378" stroke="#a4a4a4" stroke-width="5" fill="none"/>
<path d="M650,352 L998,446" stroke="#000" stroke-width="13" stroke-linecap="round" fill="none"/>
<path d="M650,352 L998,446" stroke="#767676" stroke-width="11" stroke-linecap="round" fill="none"/>
<path d="M650,350 L998,444" stroke="#a4a4a4" stroke-width="5" stroke-linecap="round" fill="none"/>
<!-- left leg -->
<path d="M633,282 L650,273 L660,290 L640,288 L633,310Z" fill="#f6f6f6"/>
<path d="M600,365 L643,295 L660,290 L660,342 L635,352 L620,360 L608,372Z" fill="#7a7a7a"/>
<circle cx="640" cy="335" r="2" fill="#eee"/>
<!-- left plate + top screw -->
<path d="M652,228 L680,222 L682,287 L662,290 L652,253Z" fill="#777"/>
<path d="M652,228 L662,225 L665,250 L652,253Z" fill="#8a8a8a"/>
<path d="M670,242 L1023,345" stroke="#000" stroke-width="8" stroke-linecap="round" fill="none"/>
<path d="M670,240 L1023,343" stroke="#777" stroke-width="1" stroke-dasharray="1 3" fill="none"/>
<!-- right leg -->
<path d="M1038,407 L1072,398 L1070,462 L1050,472 L1038,468Z" fill="#f6f6f6"/><path d="M1050,408 V472" fill="none"/>
<path d="M1038,460 L1070,452 L1070,462 L1050,472 L1038,468Z" fill="#fff"/>
<path d="M978,468 L1017,405 L1037,407 L1038,463 L982,478Z" fill="#7c7c7c"/>
<path d="M982,478 L1038,458 L1038,463 L992,483Z" fill="#8f8f8f"/><path d="M992,483 L1034,468 L1038,470 L1000,487Z" fill="#777"/>
<circle cx="1010" cy="446" r="2" fill="#eee"/>
<!-- right plate + motor -->
<path d="M1023,342 L1047,332 L1052,337 L1052,355 L1070,383 L1070,397 L1050,407 L1023,402Z" fill="#7c7c7c"/>
<path d="M1042,345 L1050,342 L1050,355 L1042,358Z" fill="#d02020"/>
<path d="M1050,342 L1068,338 L1100,353 L1083,360Z" fill="#c0c0c0"/>
<path d="M1050,342 L1083,360 L1087,385 L1050,367Z" fill="#a8a8a8"/>
<path d="M1083,360 L1100,353 L1100,373 L1087,385Z" fill="#707070"/>
<path d="M1050,350 L1084,367M1050,356 L1085,373" fill="none" stroke-width=".7"/>
<g fill="none" stroke-width="1"><path d="M1035,350V395M1020,385L1052,380" stroke="#70e030"/><path d="M1023,370L1045,378V398L1023,391Z" stroke="#2a90e8"/><path d="M1023,400L1048,405M1045,365V400" stroke="#e88c8c"/></g>

<!-- Z assembly -->
<path d="M888,325 L900,318 L925,327 L925,345 L907,355 L888,343Z" fill="#6a6a6a"/>
<path d="M888,325 L900,318 L925,327 L908,335Z" fill="#8a8a8a"/>
<path d="M900,311 L1023,345" stroke="#000" stroke-width="8" fill="none"/>
<path d="M900,309 L1023,343" stroke="#777" stroke-width="1" stroke-dasharray="1 3" fill="none"/>
<circle cx="893" cy="308" r="8" fill="#2fe23a" stroke="#0c6a10"/><circle cx="897" cy="310" r="5" fill="#19a826"/>
<path d="M867,303 L885,293 L888,443 L868,453Z" fill="#777"/>
<path d="M868,360 L884,352 L884,392 L868,402Z" fill="#666"/>
<path d="M868,400 L885,388 L888,441 L868,452Z" fill="#8c8c8c"/><circle cx="878" cy="435" r="3" fill="#333"/>
<path d="M823,300 H833 V344 H823Z" fill="#8a8a8a"/>
<path d="M862,305 H872 V352 H862Z" fill="#8a8a8a"/>
<rect x="842" y="311" width="10" height="42" fill="#111"/><path d="M842,316h10M842,320h10M842,324h10M842,328h10M842,332h10M842,336h10M842,340h10M842,344h10M842,348h10" stroke="#999" stroke-width="1"/>
<path d="M840,307h12v4h-12z" fill="#e01818" stroke="none"/>
<path d="M803,287 L823,277 L887,292 L862,303Z" fill="#8c8c8c"/>
<path d="M803,287 L862,303 L862,311 L803,295Z" fill="#777"/>
<path d="M862,303 L887,292 L887,298 L862,311Z" fill="#666"/>
<path d="M828,250 L848,245 L867,252 L850,258Z" fill="#cfcfcf"/><circle cx="848" cy="250" r="1.500" fill="#666"/>
<path d="M828,250 L850,258 L850,297 L828,288Z" fill="#bdbdbd"/>
<path d="M850,258 L867,252 L866,293 L850,297Z" fill="#9a9a9a"/>
<path d="M847,257V296M851,257V297" stroke-width="1.500" fill="none"/>
<path d="M803,345 L822,338 L880,352 L867,361Z" fill="#8c8c8c"/>
<path d="M803,345 L867,361 L868,503 L857,507 L838,500 L838,372 L803,376Z" fill="#7c7c7c"/>
<g fill="#ddd" stroke="#222" stroke-width=".5"><circle cx="845" cy="366" r="1.600"/><circle cx="860" cy="366" r="1.600"/><circle cx="845" cy="382" r="1.600"/><circle cx="859" cy="382" r="1.600"/><circle cx="845" cy="410" r="1.600"/><circle cx="859" cy="415" r="1.600"/><circle cx="845" cy="427" r="1.600"/><circle cx="859" cy="431" r="1.600"/></g>
<path d="M800,372 L815,360 L838,365 L841,395 L842,460 L843,477 L797,468 L800,445Z" fill="#666"/>
<path d="M812,385 L826,390 L826,472 L812,470Z" fill="#8a8a8a"/>
<path d="M804,378 L815,392 L812,400 L802,386Z" fill="#333"/>
<path d="M825,360 L840,364 L840,392 L825,396Z" fill="#9a9a9a"/>
<circle cx="821" cy="361" r="6.500" fill="#111"/>
<path d="M816,458 l3,-6 3,6 v12 h-6z" fill="#8a8a8a"/>
<path d="M797,465 Q820,482 843,463 L843,476 Q820,493 797,478Z" fill="#111"/>
<path d="M793,480 L808,485 L808,497 L793,492Z" fill="#888"/>
<path d="M835,482 L855,478 L855,495 L840,500 L835,496Z" fill="#777"/>
<path d="M808,484 L835,490 L835,498 L815,504 L808,497Z" fill="#8c8c8c"/>
<ellipse cx="820" cy="504" rx="6" ry="4.500" fill="#111"/>
</g>

<!-- axis indicator -->
<g>
<path d="M227.500,828V797" stroke="#7cc890" stroke-width="4"/><path d="M227.500,785 l-4,12 h8z" fill="#7cc890"/>
<path d="M233,831 L262,839" stroke="#e48080" stroke-width="4"/><path d="M267,842 l-14,-7 -1,8z" fill="#e26060"/>
<path d="M223,833 L203,842" stroke="#6a98e0" stroke-width="4"/><path d="M195,845 l13,-9 3,7z" fill="#5588e0"/>
<circle cx="228" cy="829" r="6" fill="#f2f080" stroke="#c8d060"/>
<text x="223" y="779" fill="#88c8a0" style="font-size:11px">Y</text>
<text x="268" y="847" fill="#e08090" style="font-size:11px">X</text>
<text x="186" y="850" fill="#7f9bc0" style="font-size:11px">Z</text>
</g>

<!-- command area -->
<path d="M23,916V969" stroke="#8a949e" stroke-width="3" stroke-dasharray="1 1"/>
<rect x="32" y="915.500" width="1241" height="34" fill="#d8d5cd" stroke="none"/>
<path d="M32.500,950V915.500H1273V950" fill="none" stroke="#8a8a8a"/><path d="M32,949.500H1273" stroke="#000"/>
<!-- status -->
<rect y="976" width="1280" height="19" fill="url(#st)"/><path d="M0,976.500H1280" stroke="#92a4bc"/>
<path d="M1194.500,977V995M1279.500,977V995" stroke="#9fb0c8"/>
<text x="5" y="989" fill="#333" textLength="535" style="font-size:11px">Щелкните левой кнопкой мыши на объекте для его выделения (вместе с Ctrl - добавить к выделенным)</text>
<!-- taskbar -->
<rect y="995" width="1280" height="29" fill="#d4d0c8"/><path d="M0,995.500H1280" stroke="#fff"/>
<g fill="#d4d0c8" stroke="#555">
<rect x="3.500" y="998.500" width="49" height="21"/><rect x="58.500" y="998.500" width="159" height="21"/><rect x="221.500" y="998.500" width="159" height="21"/><rect x="547.500" y="998.500" width="159" height="21"/><rect x="709.500" y="998.500" width="160" height="21"/><rect x="873.500" y="998.500" width="160" height="21"/>
</g>
<g stroke="#fff" fill="none"><path d="M3.500,1019V999H52M58.500,1019V999H217M221.500,1019V999H380M547.500,1019V999H706M709.500,1019V999H869M873.500,1019V999H1033"/></g>
<rect x="384.500" y="998.500" width="160" height="21" fill="#eeebe6" stroke="#444"/><path d="M385.500,1019H544V999" stroke="#fff" fill="none"/>
<path d="M6,1004l5,-2v6l-5,1z" fill="#e2552a"/><path d="M12,1002l6,-2v7l-6,1z" fill="#6ab640"/><path d="M6,1010l5,-1v6l-5,2z" fill="#3a88e0"/><path d="M12,1009l6,-1v7l-6,1z" fill="#f0c030"/>
<text x="22" y="1013" fill="#111" style="font-weight:bold;font-size:12px" textLength="27">Пуск</text>
<ellipse cx="70" cy="1009" rx="6.500" ry="8" fill="none" stroke="#d81818" stroke-width="3.500"/>
<text class="b" x="82" y="1013" textLength="131">минимально допустимы...</text>
<path d="M228,1001l6,3v14l-6,-3z" fill="#f0d060" stroke="#a08020" stroke-width=".6"/><path d="M234,1002l3,1v15h-3z" fill="#fff0a0"/>
<text class="b" x="245" y="1013" textLength="131">C:\Documents and Settin...</text>
<circle cx="396" cy="1009" r="7.500" fill="#2f83cf"/><circle cx="396" cy="1009" r="5" fill="none" stroke="#d8eefc"/><path d="M394,1005V1013M394,1009L399,1005M394,1009L399,1013" stroke="#fff" stroke-width="1.300" fill="none"/>
<text x="408" y="1013" fill="#111" style="font-weight:bold;font-size:11.500px" textLength="133">КОМПАС-3D V15.2  - С...</text>
<rect x="553" y="1002" width="11" height="14" fill="#cfd6e4" stroke="#556"/><rect x="555" y="1004" width="7" height="3" fill="#8aa8e0"/><path d="M555,1009h7M555,1012h7" stroke="#555" stroke-dasharray="1 1"/>
<text class="b" x="570" y="1013" textLength="98">Калькулятор Плюс</text>
<rect x="714" y="1001" width="14" height="16" rx="2" fill="#c02028"/><ellipse cx="721" cy="1009" rx="3.500" ry="6" fill="none" stroke="#fff" stroke-width="1.500" transform="rotate(15 721 1009)"/>
<text class="b" x="733" y="1013" textLength="99">Коннект Менеджер</text>
<rect x="879" y="1001" width="12" height="16" fill="#fff" stroke="#333"/><rect x="881" y="1003" width="8" height="7" fill="#3a5ec0"/><path d="M881,1016l7,-7" stroke="#b02060" stroke-width="1.500"/>
<text class="b" x="897" y="1013" textLength="129">С защитой.jpg (85%) - ...</text>
<rect x="1164" y="1000" width="13" height="17" fill="#0a246a"/><text x="1164" y="1013" fill="#fff" style="font-size:11px" textLength="13">EN</text>
<rect x="1180.500" y="998.500" width="97" height="21" fill="#d4d0c8" stroke="#fff"/><path d="M1180.500,1019V998.500H1277" stroke="#888" fill="none"/>
<circle cx="1190" cy="1009" r="7" fill="#f6b93a" stroke="#c88010"/><path d="M1186,1009a4,4 0 0 1 8,0" stroke="#b46810" fill="none" stroke-width="1.500"/><path d="M1190,1009v5" stroke="#222" stroke-width="1.500"/>
<rect x="1201" y="1004" width="12" height="9" fill="#d8dcdc" stroke="#aaa"/><circle cx="1212" cy="1012" r="3.500" fill="#d02020"/>
<path d="M1221,1014l5,-6 5,4 -5,6z" fill="#888" stroke="#333" stroke-width=".6"/><path d="M1222,1005l3,-5 4,3 -1,5z" fill="#44a040"/>
<text x="1242" y="1013" fill="#111" style="font-size:11px" textLength="28">15:22</text>
</svg>
</body></html>
